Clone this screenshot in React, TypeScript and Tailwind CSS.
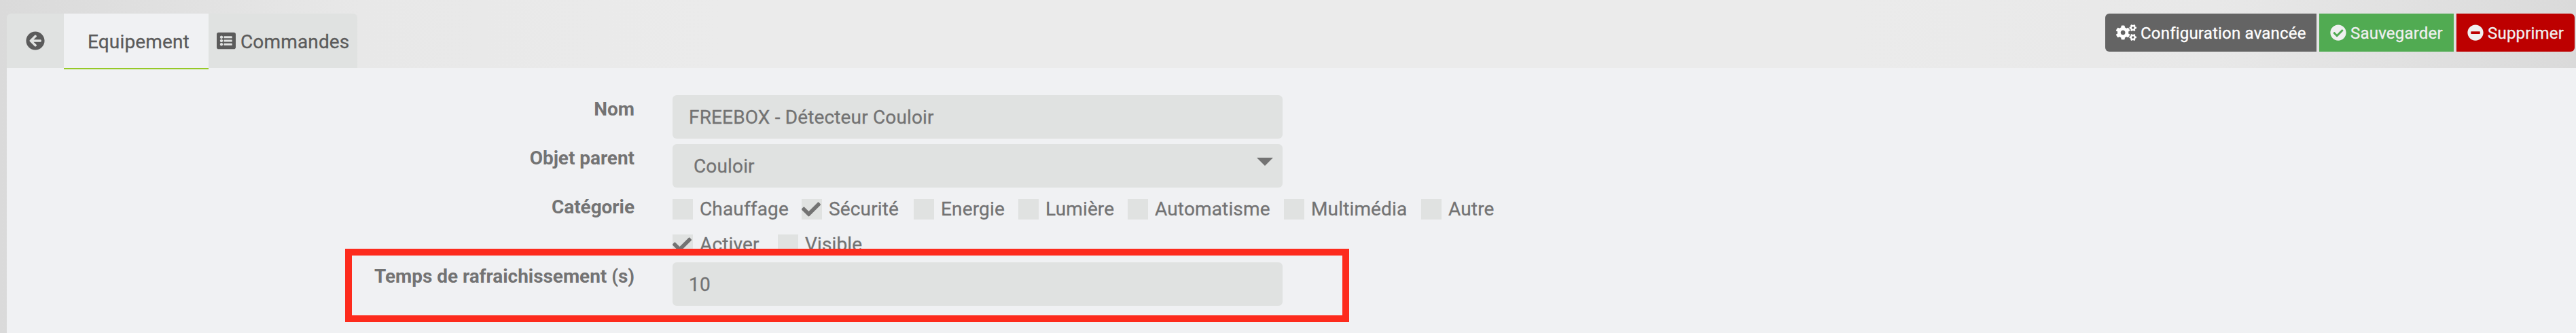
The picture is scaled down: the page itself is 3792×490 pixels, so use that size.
import React from "react";
import { FaArrowCircleLeft, FaCheckCircle, FaMinusCircle, FaCogs, FaListAlt, FaCheck } from "react-icons/fa";

function Check({ label, width, checked = false }: { label: string; width: string; checked?: boolean }) {
  return (
    <label className={`flex h-[30px] items-center ${width}`}>
      <span className="flex h-[30px] w-[30px] shrink-0 items-center bg-[#e0e2e1]">
        {checked && <FaCheck className="h-7 w-7" />}
      </span>
      <span className="pl-2.5 leading-[30px] whitespace-nowrap">{label}</span>
    </label>
  );
}

function Label({ children }: { children: React.ReactNode }) {
  return <div className="w-[924px] shrink-0 pt-[5px] text-right leading-8 font-bold tracking-[-0.05px] [-webkit-text-stroke:0px]">{children}</div>;
}

export default function App() {
  return (
    <div className="h-[490px] w-[3792px] overflow-hidden bg-[linear-gradient(to_right,#dadada_0%,#e8e8e8_14%,#ebebeb_28%,#ebebeb_72%,#e8e8e8_86%,#dadada_100%)] pt-5 pl-2.5 font-['Roboto',sans-serif] text-[28px] tracking-[0.15px] text-[#737373] [-webkit-text-stroke:0.3px]">
      <header className="flex h-20 items-start justify-between">
        <nav className="flex h-20 text-[#5b5b5b]">
          <div className="flex w-[84px] items-center rounded-tl-md bg-[#e0e2e1] pl-7">
            <FaArrowCircleLeft className="h-7 w-7" />
          </div>
          <div className="z-10 h-[82px] w-[213px] border-b-2 border-[#96c927] bg-[#f0f1f3] pt-[26px] pl-[35px] leading-8">Equipement</div>
          <div className="flex w-[219px] items-center rounded-tr-md bg-[#e0e2e1] pl-3">
            <FaListAlt className="h-7 w-7" />
            <span className="pt-1 pl-[7px] leading-8">Commandes</span>
          </div>
        </nav>
        <div className="flex gap-1 pr-0.5 text-2xl tracking-[0.2px] text-[#f0f0f0]">
          <button className="flex h-14 w-[311px] items-center rounded-l-md bg-[#646464] pl-4 text-white">
            <FaCogs className="h-6 w-[30px]" />
            <span className="pt-0.5 pl-[6px] whitespace-nowrap">Configuration avancée</span>
          </button>
          <button className="flex h-14 w-[198px] items-center bg-[#51ab52] pl-4">
            <FaCheckCircle className="h-6 w-6" />
            <span className="pt-0.5 pl-[6px]">Sauvegarder</span>
          </button>
          <button className="flex h-14 w-[174px] items-center rounded-r-md bg-[#bd0000] pl-4">
            <FaMinusCircle className="h-6 w-6" />
            <span className="pt-0.5 pl-[6px]">Supprimer</span>
          </button>
        </div>
      </header>
      <main className="h-[390px] bg-[#f0f1f3] pt-10">
        <div className="flex h-[72px]">
          <Label>Nom</Label>
          <div className="ml-14 h-16 w-[898px] rounded-md bg-[#e0e2e1] pl-6 leading-[66px]">FREEBOX - Détecteur Couloir</div>
        </div>
        <div className="flex h-[72px]">
          <Label>Objet parent</Label>
          <div className="ml-14 flex h-16 w-[898px] items-start justify-between rounded-md bg-[#e0e2e1] pr-3.5 pl-[31px] leading-[66px]">
            <span>Couloir</span>
            <svg className="mt-5 h-3 w-6" viewBox="0 0 24 12"><path d="M0 0h24L12 12z" fill="#737373" /></svg>
          </div>
        </div>
        <div className="flex h-[61px]">
          <Label>Catégorie</Label>
          <div className="ml-14 flex pt-[9px]">
            <Check label="Chauffage" width="w-[190px]" />
            <Check label="Sécurité" width="w-[165px]" checked />
            <Check label="Energie" width="w-[154px]" />
            <Check label="Lumière" width="w-[161px]" />
            <Check label="Automatisme" width="w-[230px]" />
            <Check label="Multimédia" width="w-[202px]" />
            <Check label="Autre" width="w-[120px]" />
          </div>
        </div>
        <div className="ml-[980px] flex h-[41px]">
          <Check label="Activer" width="w-[155px]" checked />
          <Check label="Visible" width="w-[140px]" />
        </div>
        <div className="relative flex h-16">
          <Label>Temps de rafraichissement (s)</Label>
          <div className="ml-14 h-16 w-[898px] rounded-md bg-[#e0e2e1] pl-6 leading-[66px]">10</div>
          <div className="absolute -top-5 left-[498px] h-[108px] w-[1478px] border-10 border-[#fd2b1d]" />
        </div>
      </main>
    </div>
  );
}
